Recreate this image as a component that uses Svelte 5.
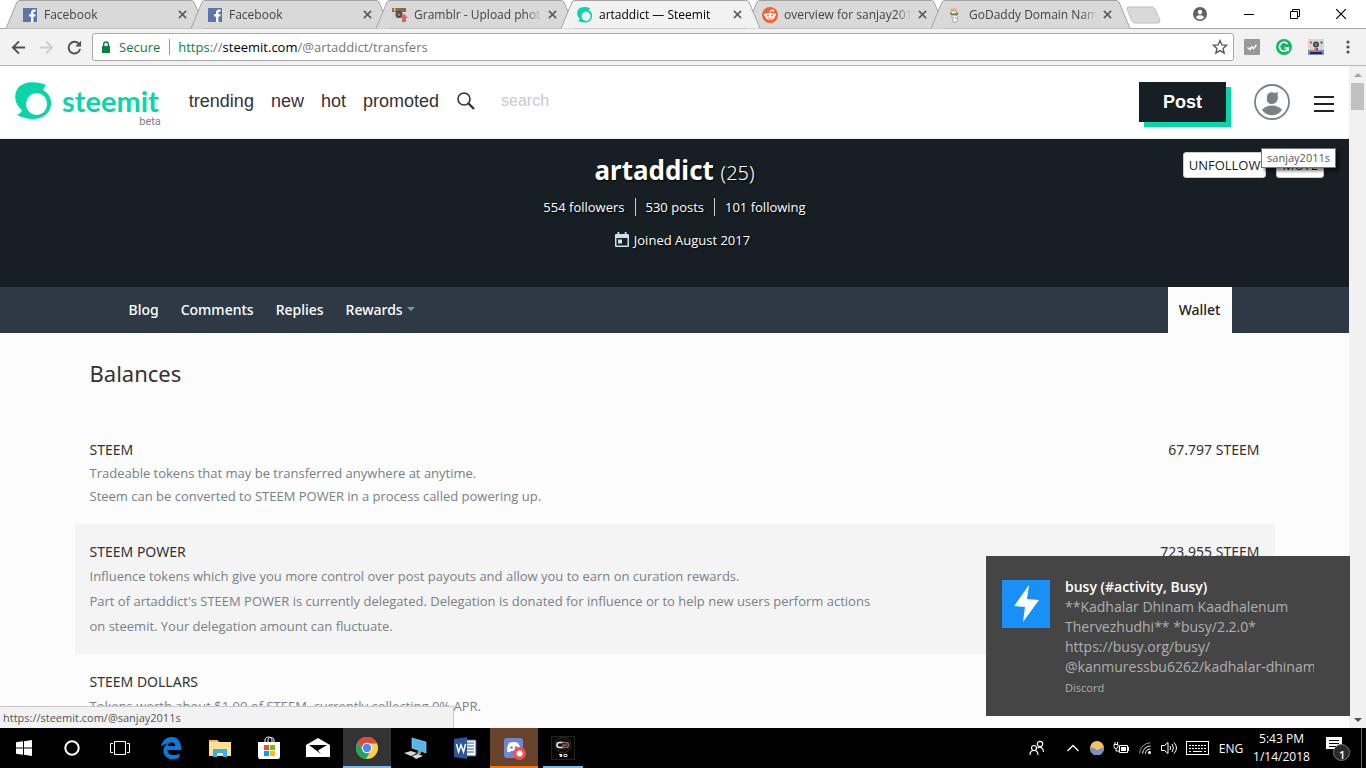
<script lang="ts">
  const tabs = [
    { title: 'Facebook', icon: 'fb' },
    { title: 'Facebook', icon: 'fb' },
    { title: 'Gramblr - Upload photos', icon: 'gramblr' },
    { title: 'artaddict — Steemit', icon: 'steemit', active: true },
    { title: 'overview for sanjay2011s', icon: 'reddit' },
    { title: 'GoDaddy Domain Names', icon: 'godaddy' }
  ];

  const links = ['trending', 'new', 'hot', 'promoted'];
  const sections = ['Blog', 'Comments', 'Replies'];

  const balances = [
    {
      name: 'STEEM',
      amount: '67.797 STEEM',
      text: [
        'Tradeable tokens that may be transferred anywhere at anytime.',
        'Steem can be converted to STEEM POWER in a process called powering up.'
      ]
    },
    {
      name: 'STEEM POWER',
      amount: '723.955 STEEM',
      loose: true,
      text: [
        'Influence tokens which give you more control over post payouts and allow you to earn on curation rewards.',
        "Part of artaddict's STEEM POWER is currently delegated. Delegation is donated for influence or to help new users perform actions",
        'on steemit. Your delegation amount can fluctuate.'
      ]
    },
    {
      name: 'STEEM DOLLARS',
      amount: '',
      loose: true,
      text: ['Tokens worth about $1.00 of STEEM, currently collecting 0% APR.']
    }
  ];

  const apps = [
    { name: 'Edge', state: '' },
    { name: 'Explorer', state: '' },
    { name: 'Store', state: '' },
    { name: 'Mail', state: '' },
    { name: 'Chrome', state: 'active' },
    { name: 'PC', state: '' },
    { name: 'Word', state: '' },
    { name: 'Discord', state: 'alert' },
    { name: 'Recorder', state: 'open' }
  ];

  let search = $state('');
  let url = $state('https://steemit.com/@artaddict/transfers');
</script>

{#snippet steemitMark()}
  <path d="M31 3C22-1 9-1 3 6c-5 7-3 17 4 22-1 2-2 4-5 5 7 4 20 6 27 1 8-5 9-16 4-22-2-2-3-3-5-4 1-2 2-4 3-5zM21.500 11a10.500 11 0 1 0 .1 0z" fill="#09d6a8" fill-rule="evenodd" />
{/snippet}

<div class="window">
  <div class="tabstrip">
    {#each tabs as tab}
      <div class="tab" class:active={tab.active}>
        <svg class="shape" viewBox="0 0 199 29" preserveAspectRatio="none">
          <path d="M0 28.5L11 2Q12 .5 14 .5H185Q187 .5 188 2L199 28.5" />
        </svg>
        <svg class="fav" viewBox="0 0 16 16">
          {#if tab.icon === 'fb'}
            <rect x="1" y="1" width="14" height="14" fill="#5b74ad" />
            <path d="M9 15V9.500H7V7.200h2V5.500C9 3.600 10.200 2.600 12 2.600h1.600v2.200h-1c-.9 0-1.200.4-1.200 1.100v1.300h2.200l-.3 2.300h-1.900V15z" fill="#fff" />
          {:else if tab.icon === 'gramblr'}
            <rect x="0" y="1" width="14" height="4" fill="#8a6552" />
            <path d="M1 1h1v3H1z" fill="#e05a4f" /><path d="M2 1h1v3H2z" fill="#e8c34a" /><path d="M3 1h1v3H3z" fill="#58a6c8" />
            <rect x="0" y="5" width="13" height="7" fill="#d8d3cd" />
            <circle cx="7" cy="7.500" r="3.500" fill="#4a4a4a" /><circle cx="7" cy="7.500" r="1.500" fill="#888" />
            <path d="M12 7l4 4h-2v4h-4v-4H8z" fill="#e2635a" />
          {:else if tab.icon === 'steemit'}
            <g transform="scale(.42)">{@render steemitMark()}</g>
          {:else if tab.icon === 'reddit'}
            <circle cx="8" cy="8" r="8" fill="#ff5f2e" />
            <ellipse cx="8" cy="9.300" rx="5" ry="3.500" fill="#fff" />
            <circle cx="3.300" cy="7.700" r="1.300" fill="#fff" /><circle cx="12.700" cy="7.700" r="1.300" fill="#fff" /><circle cx="11" cy="3.500" r="1" fill="#fff" />
            <path d="M8 6l.7-2.800L11 3.500" fill="none" stroke="#fff" stroke-width=".8" />
            <circle cx="6" cy="8.500" r="1" fill="#ff5f2e" /><circle cx="10" cy="8.500" r="1" fill="#ff5f2e" />
            <path d="M6 10.800q2 1.200 4 0" fill="none" stroke="#ff5f2e" stroke-width=".8" />
          {:else}
            <path d="M3 0l2 2 2-2 1 2 2-1-1 3H4z" fill="#f3b574" />
            <path d="M4 4h6l-1 4 2 2-1 5H6l-1-5z" fill="#f5f5f0" stroke="#888" stroke-width=".6" />
            <path d="M3 6l3 1 5-1-1 2H5z" fill="#8bab4b" stroke="#4a5a38" stroke-width=".6" />
            <path d="M6 10l1 1M9 10v2" stroke="#666" stroke-width=".7" />
          {/if}
        </svg>
        <span class="title">{tab.title}</span>
        <button class="close" aria-label="Close tab">
          <svg viewBox="0 0 10 10"><path d="M1 1l8 8M9 1L1 9" stroke="#5a5a5a" stroke-width="1.700" /></svg>
        </button>
      </div>
    {/each}
    <button class="newtab" aria-label="New tab">
      <svg viewBox="0 0 36 18"><path d="M2 1H26Q28 1 29 3L34 15Q34 17 32 17H9Q7 17 6 15L1 3Q1 1 2 1Z" fill="#d9d9d9" stroke="#bcbcbc" /></svg>
    </button>
    <div class="controls">
      <button class="who" aria-label="Profile">
        <svg viewBox="0 0 14 14"><circle cx="7" cy="7" r="7" fill="#5f6063" /><circle cx="7" cy="5" r="2.200" fill="#fff" /><path d="M2.800 10.600C3.500 8.700 5.500 8.300 7 8.300s3.500.4 4.200 2.300c-2 2.400-6.400 2.400-8.400 0z" fill="#fff" /></svg>
      </button>
      <button aria-label="Minimize"><svg viewBox="0 0 10 10"><path d="M0 5.500h10" stroke="#000" /></svg></button>
      <button aria-label="Restore"><svg viewBox="0 0 10 10"><path d="M.5 2.500h7v7h-7zM2.500 2V.5h7v7H8" fill="none" stroke="#000" /></svg></button>
      <button aria-label="Close"><svg viewBox="0 0 10 10"><path d="M0 0l10 10M10 0L0 10" stroke="#000" stroke-width="1.200" /></svg></button>
    </div>
  </div>

  <div class="toolbar">
    <button class="tool" aria-label="Back"><svg viewBox="0 0 16 16"><path d="M15 8H2.500M8.500 1.500L2 8l6.500 6.500" fill="none" stroke="#505050" stroke-width="2" /></svg></button>
    <button class="tool" aria-label="Forward"><svg viewBox="0 0 16 16"><path d="M1 8h12.500M7.500 1.500L14 8l-6.500 6.500" fill="none" stroke="#cfcfcf" stroke-width="2" /></svg></button>
    <button class="tool" aria-label="Reload"><svg viewBox="0 0 16 16"><path d="M13 4.500A6.200 6.200 0 1 0 14 9.500" fill="none" stroke="#505050" stroke-width="2" /><path d="M15 .8V7H8.800z" fill="#505050" /></svg></button>
    <div class="omnibox">
      <svg class="lock" viewBox="0 0 10 12"><path d="M1 5h8v7H1z" fill="#0b8043" /><path d="M2.700 5.500V3.300a2.300 2.300 0 0 1 4.600 0v2.200" fill="none" stroke="#0b8043" stroke-width="1.400" /></svg>
      <span class="secure">Secure</span>
      <label class="address">
        <span class="url"><i>https</i>://<b>steemit.com</b>/@artaddict/transfers</span>
        <input type="text" aria-label="Address" bind:value={url} />
      </label>
      <svg class="star" viewBox="0 0 16 16"><path d="M8 1.500l1.900 4.400 4.800.4-3.700 3.100 1.200 4.700L8 11.600l-4.200 2.500L5 9.400 1.300 6.300l4.800-.4z" fill="none" stroke="#555" stroke-width="1.300" /></svg>
    </div>
    <div class="extensions">
      <svg viewBox="0 0 16 16"><rect width="16" height="16" rx="1" fill="#999" /><path d="M3.500 8.500L6 10.500l1.500-2.500 2 1.500L12.500 6" fill="none" stroke="#fff" stroke-width="1.600" /></svg>
      <svg viewBox="0 0 16 16"><circle cx="8" cy="8" r="8" fill="#14b86c" /><path d="M11.500 5A4.500 4.500 0 1 0 12.300 9H8.500M12.300 8.500V12" fill="none" stroke="#fff" stroke-width="1.600" /></svg>
      <svg viewBox="0 0 16 16"><rect width="16" height="11" fill="#dcd3d3" /><rect y="11" width="16" height="5" fill="#7f8bb8" /><rect x="2" y="13" width="12" height="2" fill="#232845" /><circle cx="8" cy="5.500" r="3" fill="#39434f" /><circle cx="8" cy="5.500" r="1.200" fill="#8d99aa" /><path d="M6 9h2v3H6z" fill="#e88b2e" /><path d="M8 9h2v3H8z" fill="#774bb5" /><circle cx="3" cy="3.500" r="1" fill="#e0233f" /><circle cx="13.500" cy="3.500" r="1" fill="#333" /></svg>
    </div>
    <button class="dots" aria-label="Menu"><svg viewBox="0 0 4 14"><circle cx="2" cy="2" r="1.600" /><circle cx="2" cy="7" r="1.600" /><circle cx="2" cy="12" r="1.600" /></svg></button>
  </div>

  <div class="viewport">
    <main class="page">
      <header class="header">
        <a class="logo" href="/">
          <svg viewBox="0 0 38 38">{@render steemitMark()}</svg>
          <span class="word">steemit<small>beta</small></span>
        </a>
        <nav class="links">
          {#each links as link}
            <a href="/{link}">{link}</a>
          {/each}
        </nav>
        <form class="search">
          <button type="button" aria-label="Search"><svg viewBox="0 0 18 18"><circle cx="7" cy="7" r="6" fill="none" stroke="#333" stroke-width="1.600" /><path d="M11.500 11.500l5.500 5.500" stroke="#333" stroke-width="2.400" /></svg></button>
          <input type="search" placeholder="search" aria-label="search" bind:value={search} />
        </form>
        <button class="post">Post</button>
        <a class="avatar" href="/@sanjay2011s" aria-label="Account">
          <svg viewBox="0 0 36 36"><circle cx="18" cy="18" r="17" fill="#fff" stroke="#788187" stroke-width="1.800" /><path d="M13 13c0-4 4-6 8-4l3-1-.500 3c1.500 5-1.500 9-5.500 9s-6-3-5-7z" fill="#788187" /><path d="M8 26c4-6 16-6 20 0-5 7-15 7-20 0z" fill="#788187" /></svg>
        </a>
        <button class="burger" aria-label="Open menu"><svg viewBox="0 0 20 16"><path d="M0 1h20M0 8h20M0 15h20" stroke="#222" stroke-width="2" /></svg></button>
      </header>

      <section class="banner">
        <h1>artaddict <span>(25)</span></h1>
        <div class="stats">
          <a href="/@artaddict/followers">554 followers</a>
          <a href="/@artaddict">530 posts</a>
          <a href="/@artaddict/followed">101 following</a>
        </div>
        <p class="joined">
          <svg viewBox="0 0 14 16"><path d="M1 2h12a1 1 0 0 1 1 1v11a1 1 0 0 1-1 1H1a1 1 0 0 1-1-1V3a1 1 0 0 1 1-1zm.5 4v7.500h11V6zM2.500 0h1.700v2H2.500zM9.800 0h1.700v2H9.800zM3 7.500h4v4H3z" fill="#cfdfec" fill-rule="evenodd" /></svg>
          Joined August 2017
        </p>
        <div class="actions">
          <button>UNFOLLOW</button>
          <button>MUTE</button>
          <span class="tooltip">sanjay2011s</span>
        </div>
      </section>

      <nav class="menu">
        <div class="inner">
          {#each sections as section}
            <a href="/@artaddict/{section}">{section}</a>
          {/each}
          <a href="/@artaddict/rewards">Rewards<i class="caret"></i></a>
          <a class="current" href="/@artaddict/transfers">Wallet</a>
        </div>
      </nav>

      <section class="wallet">
        <h2>Balances</h2>
        {#each balances as row}
          <div class="balance" class:loose={row.loose}>
            <div>
              <h3>{row.name}</h3>
              {#each row.text as line}
                <p>{line}</p>
              {/each}
            </div>
            <span class="amount">{row.amount}</span>
          </div>
        {/each}
      </section>
    </main>

    <div class="scrollbar">
      <i class="up"></i>
      <div class="thumb"></div>
      <i class="down"></i>
    </div>
    <div class="status">https://steemit.com/@sanjay2011s</div>
  </div>

  <aside class="toast">
    <svg viewBox="0 0 48 48"><rect width="48" height="48" fill="#1890f7" /><path d="M27 5L12 26l11 1-2 15 16-22-12-1z" fill="#fff" /></svg>
    <div class="message">
      <strong>busy (#activity, Busy)</strong>
      <p>**Kadhalar Dhinam Kaadhalenum</p>
      <p>Thervezhudhi** *busy/2.2.0*</p>
      <p>https://busy.org/busy/</p>
      <p>@kanmuressbu6262/kadhalar-dhinam</p>
      <small>Discord</small>
    </div>
  </aside>

  <footer class="taskbar">
    <button aria-label="Start"><svg width="16" height="16" viewBox="0 0 16 16"><path d="M0 2.300l7-1v6.200H0zM8 1.200L16 0v7.500H8zM0 8.500h7v6.200l-7-1zM8 8.500h8V16l-8-1.200z" fill="#fff" /></svg></button>
    <button aria-label="Cortana"><svg width="16" height="16" viewBox="0 0 16 16"><circle cx="8" cy="8" r="6.700" fill="none" stroke="#fff" stroke-width="2" /></svg></button>
    <button aria-label="Task view"><svg width="20" height="14" viewBox="0 0 20 14"><path d="M4.500.5h11v13h-11zM3 2.500H.5v9H3M17 2.500h2.500v9H17" fill="none" stroke="#fff" /></svg></button>
    <div class="apps">
      {#each apps as app}
        <button class={app.state} aria-label={app.name}>
          <svg width="24" height="24" viewBox="0 0 24 24">
            {#if app.name === 'Edge'}
              <path d="M2 11C3 5 7 1 12.500 1 19 1 22 6 22 11v3H8.500c.3 6 8 6 12 3.500V21.500C13 25.500 4 22 4.500 14c.2-3 2-5.500 4.500-6.500-3.500.3-5.800 1.800-7 3.500zM8.600 10h7.600c0-5-7-5-7.600 0z" fill="#0a7bdc" />
            {:else if app.name === 'Explorer'}
              <path d="M1 4h8l2 2h12v14H1z" fill="#ffe08f" /><path d="M1 4h8l2 2H1z" fill="#e9bd52" />
              <path d="M5 13h14v8h-4v-4H9v4H5z" fill="#38b0e5" />
            {:else if app.name === 'Store'}
              <path d="M1 6h22v15l-1 2H2l-1-2z" fill="#fff" /><path d="M8 6V4c0-4 7-4 7 0v2M11 6V3c1-2 6-2 6 1v2" fill="none" stroke="#fff" />
              <path d="M7 9h5v5H7z" fill="#f25022" /><path d="M13 9h5v5h-5z" fill="#7fba00" /><path d="M7 15h5v5H7z" fill="#00a4ef" /><path d="M13 15h5v5h-5z" fill="#ffb900" />
            {:else if app.name === 'Mail'}
              <path d="M0 9l12-7 12 7v12H0z" fill="#fff" /><path d="M3 9h18l-9 5.500 3 3.500z" fill="#000" />
            {:else if app.name === 'Chrome'}
              <circle cx="12" cy="12" r="11" fill="#fbd04b" />
              <path d="M2.500 6.500A11 11 0 0 0 11 23l4.500-8L12 12 7 13z" fill="#1fa463" />
              <path d="M2.500 6.500L8 14l4-6.500h10A11 11 0 0 0 2.500 6.500z" fill="#dc4b3e" />
              <circle cx="12" cy="12" r="5.200" fill="#fff" /><circle cx="12" cy="12" r="4.200" fill="#4a89f3" />
            {:else if app.name === 'PC'}
              <path d="M8 2l14 4v11L8 12z" fill="#4db7ee" stroke="#b8dff2" stroke-width=".6" /><path d="M14 14l3 1v3l-4 1z" fill="#8c9499" />
              <path d="M0 17l7-2 6 2-6 3zM8 20l6-2 5 2-7 3z" fill="#d5d9dc" />
            {:else if app.name === 'Word'}
              <path d="M12 4h11v16H12z" fill="#fff" stroke="#2b579a" /><path d="M14 7h7M14 10h7M14 13h7M14 16h7" stroke="#2b579a" />
              <path d="M1 3l13-2v22L1 21z" fill="#2b579a" /><path d="M3.500 8l2 8L8 9l2.500 7 2-8" fill="none" stroke="#fff" stroke-width="1.500" />
            {:else if app.name === 'Discord'}
              <rect x="2" y="2" width="19" height="20" rx="3" fill="#7086d2" /><path d="M7 7q5-2 9 0 3 4 2 8-2 2-3 1l-1-1H9l-1 1q-2 1-3-1 0-5 2-8z" fill="#fff" /><circle cx="9.500" cy="11.500" r="1.300" fill="#7086d2" /><circle cx="14" cy="11.500" r="1.300" fill="#7086d2" />
              <circle cx="17.500" cy="17.500" r="6.500" fill="#ee5353" /><circle cx="17.500" cy="17.500" r="3" fill="#fff" />
            {:else}
              <rect x=".5" y=".5" width="23" height="23" fill="#050505" stroke="#222" /><circle cx="12" cy="9" r="8" fill="#111" stroke="#2c2c2c" />
              <path d="M12 6.500H8.500a2.500 2.500 0 0 0 0 5H12" fill="none" stroke="#eee" stroke-width="1.600" /><path d="M11 6.500h4a2.500 2.500 0 0 1 0 5h-3V9h4" fill="none" stroke="#8c6257" stroke-width="1.600" />
              <path d="M8 18.500h3v1H9v1h2M13 20.500v-2h3v2z" fill="none" stroke="#ddd" />
            {/if}
          </svg>
        </button>
      {/each}
    </div>
    <div class="tray">
      <button class="wide" aria-label="People"><svg width="16" height="16" viewBox="0 0 16 16"><g fill="none" stroke="#fff" stroke-width="1.200"><circle cx="11" cy="4" r="2.700" /><circle cx="5" cy="8" r="2.500" /><path d="M1 15c0-6 8-6 8 0M8.500 8c3-2 6 0 6 4" /></g></svg></button>
      <button aria-label="Show hidden icons"><svg width="12" height="8" viewBox="0 0 12 8"><path d="M.5 7L6 1.500 11.500 7" fill="none" stroke="#fff" stroke-width="1.300" /></svg></button>
      <button aria-label="Weather"><svg width="14" height="14" viewBox="0 0 14 14"><circle cx="7" cy="7" r="7" fill="#fbbf66" /><path d="M0 8c3-4 5 1 8 1 2 0 3-3 6-2a7 7 0 0 1-14 1z" fill="#7890c8" /></svg></button>
      <button aria-label="Battery"><svg width="16" height="12" viewBox="0 0 16 12"><path d="M1 2.500h4v2a2 2 0 0 1-4 0zM2 0v2M4.500 0v2M3 6.500V9h3" fill="none" stroke="#fff" /><path d="M6.500 3.500h8v7h-8zM15.500 5v4" fill="none" stroke="#fff" /><path d="M8 5h5v4H8z" fill="#fff" /></svg></button>
      <button aria-label="Wi-Fi"><svg width="12" height="12" viewBox="0 0 12 12"><g fill="none" stroke="#fff"><path d="M.5 11.500A11 11 0 0 1 11.500.8" opacity=".6" /><path d="M3.500 11.500a8 8 0 0 1 8-7.500M6.500 11.500a5 5 0 0 1 5-4.500" /></g><circle cx="10.500" cy="10.500" r="1.500" fill="#fff" /></svg></button>
      <button aria-label="Volume"><svg width="16" height="14" viewBox="0 0 16 14"><path d="M.5 4.500h3L7 1.500v11l-3.500-3h-3zM9 5q1.500 2 0 4M11 3q3 4 0 8M13 1.500q5 5.500 0 11" fill="none" stroke="#fff" /></svg></button>
      <button class="keys" aria-label="Keyboard"><svg width="23" height="14" viewBox="0 0 23 14"><rect x=".5" y=".5" width="22" height="13" fill="none" stroke="#fff" /><path d="M3 4.500h17M3 7.500h17" stroke="#fff" stroke-dasharray="2 1" /><path d="M3 10.500h2M7 10.500h9M18 10.500h2" stroke="#fff" /></svg></button>
      <button class="lang">ENG</button>
      <button class="clock"><span>5:43 PM</span><span>1/14/2018</span></button>
      <button class="notes" aria-label="Notifications">
        <svg width="24" height="26" viewBox="0 0 24 26"><path d="M0 2h16v12h-4v3l-3-3H0z" fill="#fff" /><path d="M3 5.500h10M3 8.500h10M3 11.500h7" stroke="#000" /><circle cx="15.500" cy="17.500" r="8" fill="#2b2b2b" stroke="#777" /></svg>
        <span class="count">1</span>
      </button>
      <i class="edge"></i>
    </div>
  </footer>
</div>

<style>
  :global(body) {
    margin: 0;
    overflow: hidden;
  }

  .window {
    --ui: "Open Sans", "Noto Sans", sans-serif;
    --site: "Noto Sans", "Open Sans", sans-serif;
    --green: #09d6a8;
    --dark: #171f24;
    position: relative;
    display: flex;
    flex-direction: column;
    height: 100vh;
    background: #fff;
    font-family: var(--ui);
    font-size: 12px;
    color: #333;
  }

  button {
    display: flex;
    align-items: center;
    justify-content: center;
    padding: 0;
    border: 0;
    background: none;
    font: inherit;
    color: inherit;
  }

  a {
    color: inherit;
    text-decoration: none;
  }

  h1, h2, h3, p {
    margin: 0;
    font-weight: 400;
  }

  svg {
    display: block;
    flex: none;
  }

  /* browser tabs */
  .tabstrip {
    display: flex;
    align-items: flex-start;
    height: 29px;
    padding: 0 2px 0 6px;
    box-shadow: inset 0 -1px #a3a3a3;
  }
  .tab {
    position: relative;
    display: flex;
    align-items: center;
    flex: 0 1 199px;
    box-sizing: border-box;
    min-width: 0;
    height: 29px;
    margin-right: -14px;
    padding: 0 15px 0 16px;
    color: #444;
  }
  .tab.active {
    z-index: 1;
    color: #000;
  }
  .shape {
    position: absolute;
    inset: 0;
    width: 100%;
    height: 100%;
    fill: #d9d9d9;
    stroke: #a3a3a3;
  }
  .active .shape {
    fill: #f2f2f2;
  }
  .fav {
    position: relative;
    width: 16px;
    height: 16px;
  }
  .title {
    position: relative;
    flex: 1;
    min-width: 0;
    margin: 0 2px 0 6px;
    overflow: hidden;
    white-space: nowrap;
    mask-image: linear-gradient(to left, transparent, #000 16px);
  }
  .close {
    position: relative;
    width: 16px;
    height: 16px;
  }
  .close svg {
    width: 9px;
    height: 9px;
  }
  .newtab {
    margin: 6px 0 0 10px;
  }
  .newtab svg {
    width: 36px;
    height: 18px;
  }
  .controls {
    display: flex;
    margin-left: auto;
  }
  .controls button {
    width: 46px;
    height: 27px;
  }
  .controls .who {
    width: 52px;
  }
  .controls svg {
    width: 10px;
    height: 10px;
  }
  .controls .who svg {
    width: 14px;
    height: 14px;
  }

  /* address bar */
  .toolbar {
    display: flex;
    align-items: center;
    box-sizing: border-box;
    height: 37px;
    padding: 0 13px 0 4px;
    background: #f2f2f2;
    border-bottom: 1px solid #b5b5b5;
  }
  .tool {
    width: 28px;
    height: 28px;
  }
  .tool svg {
    width: 15px;
    height: 15px;
  }
  .omnibox {
    display: flex;
    flex: 1;
    align-items: center;
    box-sizing: border-box;
    height: 28px;
    margin-left: 4px;
    padding: 0 5px 0 8px;
    border: 1px solid #a9a9a9;
    border-radius: 3px;
    background: #fff;
    font-size: 13px;
  }
  .lock {
    width: 10px;
    height: 12px;
  }
  .secure {
    margin: 0 9px 0 8px;
    color: #0b8043;
  }
  .address {
    position: relative;
    flex: 1;
    padding-left: 8px;
    border-left: 1px solid #999;
    line-height: 16px;
  }
  .url {
    color: #777;
  }
  .url i {
    font-style: normal;
    color: #0b8043;
  }
  .url b {
    font-weight: 400;
    color: #000;
  }
  .address input {
    position: absolute;
    inset: 0;
    width: 100%;
    padding: 0 0 0 8px;
    border: 0;
    background: none;
    font: inherit;
    color: transparent;
  }
  .star {
    width: 16px;
    height: 16px;
  }
  .extensions {
    display: flex;
    gap: 16px;
    margin: 0 19px 0 10px;
  }
  .extensions svg {
    width: 16px;
    height: 16px;
  }
  .dots {
    width: 10px;
    height: 28px;
    fill: #505050;
  }
  .dots svg {
    width: 4px;
    height: 14px;
  }

  /* page */
  .viewport {
    position: relative;
    display: flex;
    flex: 1;
    min-height: 0;
  }
  .page {
    flex: 1;
    min-width: 0;
    overflow: hidden;
    background: #fcfcfc;
  }
  .scrollbar {
    display: flex;
    flex-direction: column;
    align-items: center;
    width: 17px;
    background: #f1f1f1;
  }
  .scrollbar i {
    border: 4px solid transparent;
  }
  .scrollbar .up {
    margin: 3px 0 6px;
    border-bottom-color: #a3a3a3;
  }
  .scrollbar .down {
    margin: auto 0 6px;
    border-top-color: #505050;
    border-bottom: 0;
  }
  .thumb {
    width: 13px;
    height: 27px;
    background: #c1c1c1;
  }
  .status {
    position: absolute;
    left: 0;
    bottom: 0;
    box-sizing: border-box;
    width: 454px;
    padding: 0 3px;
    border: solid #c8c8c8;
    border-width: 1px 1px 0 0;
    background: #f2f2f2;
    font-size: 11px;
    line-height: 21px;
    color: #555;
  }

  .header {
    display: flex;
    align-items: center;
    box-sizing: border-box;
    height: 73px;
    padding: 0 15px;
    background: #fff;
    border-bottom: 1px solid #eee;
    font-family: "Liberation Sans", Arial, sans-serif;
  }
  .logo,
  .links,
  .search {
    padding-bottom: 2px;
  }
  .logo {
    display: flex;
    align-items: center;
  }
  .logo svg {
    width: 38px;
    height: 38px;
  }
  .word {
    position: relative;
    margin-left: 9px;
    font: 700 29px/34px Lato, sans-serif;
    color: var(--green);
  }
  .word small {
    position: absolute;
    right: -2px;
    top: 31px;
    font: 11px/14px Roboto, sans-serif;
    color: #788187;
  }
  .links {
    display: flex;
    gap: 17px;
    margin-left: 30px;
    font-size: 18px;
  }
  .search {
    display: flex;
    align-items: center;
    flex: 1;
    margin-left: 18px;
  }
  .search svg {
    width: 18px;
    height: 18px;
  }
  .search input {
    flex: 1;
    min-width: 0;
    margin-left: 24px;
    padding: 0 2px;
    border: 0;
    background: none;
    font: 16px/20px "Liberation Sans", Arial, sans-serif;
  }
  .search input::placeholder {
    color: #cacaca;
  }
  .post {
    width: 87px;
    height: 40px;
    background: var(--dark);
    box-shadow: 5px 5px var(--green);
    font-size: 18px;
    font-weight: 700;
    color: #fff;
  }
  .avatar {
    margin: 0 24px 0 28px;
  }
  .avatar svg {
    width: 36px;
    height: 36px;
  }
  .burger {
    padding-top: 3px;
  }
  .burger svg {
    width: 20px;
    height: 16px;
  }

  .banner {
    position: relative;
    box-sizing: border-box;
    min-height: 148px;
    padding-top: 14px;
    background: var(--dark);
    font-family: var(--ui);
    text-align: center;
    color: #fff;
    text-shadow: 1px 1px 2px #000;
  }
  .banner h1 {
    font-family: var(--site);
    font-size: 26px;
    font-weight: 700;
    line-height: 34px;
  }
  .banner h1 span {
    font-size: 20px;
    font-weight: 300;
  }
  .stats {
    display: flex;
    justify-content: center;
    align-items: center;
    margin: 8px 0 12px;
    font-size: 13px;
    line-height: 24px;
  }
  .stats a {
    padding: 0 10px;
    line-height: 18px;
  }
  .stats a + a {
    border-left: 1px solid #ccc;
  }
  .joined {
    display: flex;
    justify-content: center;
    align-items: center;
    gap: 5px;
    padding-left: 16px;
    font-size: 13px;
    line-height: 24px;
  }
  .joined svg {
    width: 14px;
    height: 16px;
  }
  .actions {
    position: absolute;
    top: 13px;
    right: 25px;
    display: flex;
    gap: 10px;
  }
  .actions button {
    height: 26px;
    padding: 0 5px;
    border: 1px solid #ccc;
    border-radius: 3px;
    background: #fff;
    font-size: 13px;
    color: #222;
    text-shadow: none;
  }
  .tooltip {
    position: absolute;
    top: -4px;
    right: -12px;
    box-sizing: border-box;
    padding: 0 5px;
    border: 1px solid #767676;
    background: #fff;
    box-shadow: 3px 3px 3px rgba(0, 0, 0, .5);
    font: 11px/18px var(--ui);
    color: #575757;
    text-shadow: none;
  }

  .menu {
    background: #2d3a45;
    font-family: var(--site);
    font-size: 14px;
    font-weight: 500;
    line-height: 46px;
    color: #fff;
  }
  .inner {
    display: flex;
    box-sizing: border-box;
    max-width: 1200px;
    margin: 0 auto;
    padding: 0 43px;
  }
  .inner a {
    padding: 0 11px;
  }
  .caret {
    display: inline-block;
    margin-left: 4px;
    border: 4px solid transparent;
    border-top-color: #8c959b;
  }
  .inner .current {
    margin-left: auto;
    background: #fcfcfc;
    color: #222;
  }

  .wallet {
    box-sizing: border-box;
    max-width: 1200px;
    margin: 0 auto;
    font-family: var(--site);
  }
  .wallet h2 {
    padding: 25px 15px 34px;
    font-size: 22px;
    line-height: 30px;
  }
  .balance {
    display: flex;
    justify-content: space-between;
    padding: 16px 15px;
    font-size: 14px;
    line-height: 24px;
  }
  .balance:nth-of-type(even) {
    padding-bottom: 15px;
    background: #f4f4f4;
  }
  .balance h3 {
    font-size: 14px;
    line-height: 24px;
  }
  .balance p {
    font-family: var(--ui);
    font-size: 13px;
    line-height: 23px;
    color: #788187;
    white-space: nowrap;
  }
  .loose p {
    line-height: 25px;
  }
  .amount {
    white-space: nowrap;
  }

  /* notification */
  .toast {
    position: absolute;
    right: 16px;
    bottom: 52px;
    z-index: 2;
    display: flex;
    align-items: flex-start;
    gap: 15px;
    box-sizing: border-box;
    width: 364px;
    height: 160px;
    padding: 24px 36px 0 16px;
    background: #454545;
    font-size: 14px;
    line-height: 20px;
    color: #b0b0b0;
  }
  .toast svg {
    width: 48px;
    height: 48px;
  }
  .message {
    flex: 1;
    min-width: 0;
    margin-top: -3px;
    overflow: hidden;
    white-space: nowrap;
  }
  .message strong {
    display: block;
    font-weight: 600;
    color: #fff;
  }
  .message small {
    display: block;
    font-size: 11px;
    line-height: 22px;
  }

  /* taskbar */
  .taskbar {
    display: flex;
    height: 40px;
    background: #000;
    color: #fff;
  }
  .taskbar > button,
  .apps button {
    width: 48px;
    height: 40px;
  }
  .apps {
    display: flex;
    gap: 1px;
    padding-left: 3px;
  }
  .apps .active {
    background: #333;
    box-shadow: inset 0 -2px #76b9ed;
  }
  .apps .alert {
    background: #66432a;
    box-shadow: inset 0 -2px #ff7300;
  }
  .apps .open {
    background: linear-gradient(#76b9ed, #76b9ed) center bottom / 40px 2px no-repeat;
  }
  .tray {
    display: flex;
    margin-left: auto;
  }
  .tray button {
    width: 24px;
  }
  .tray .wide {
    width: 48px;
  }
  .tray .keys {
    width: 33px;
  }
  .tray .lang {
    width: 34px;
  }
  .tray .clock {
    flex-direction: column;
    width: 67px;
    line-height: 18px;
  }
  .tray .notes {
    position: relative;
    width: 46px;
  }
  .count {
    position: absolute;
    left: 24px;
    top: 18px;
    font-size: 11px;
    font-weight: 600;
    line-height: 18px;
  }
  .edge {
    width: 4px;
    border-left: 1px solid #666;
  }
</style>
